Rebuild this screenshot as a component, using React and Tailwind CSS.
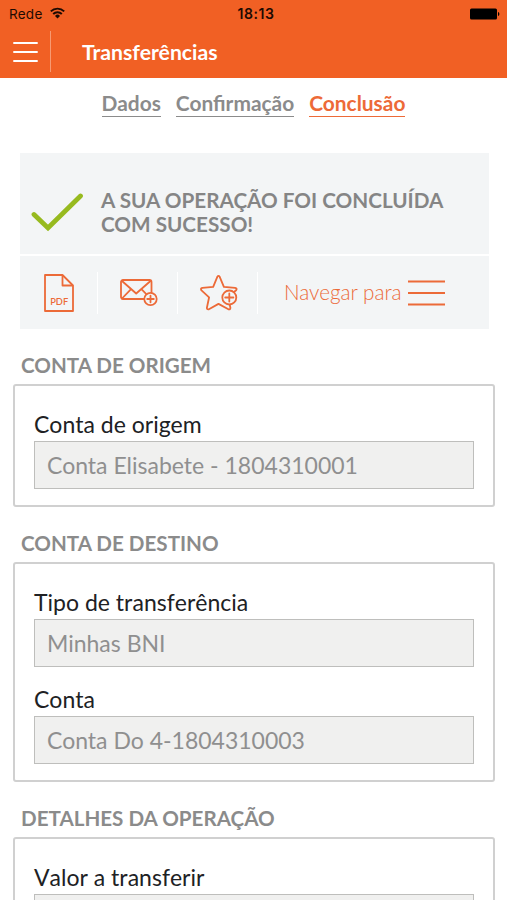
import { Fragment } from 'react';

const steps = [
  { label: 'Dados', active: false },
  { label: 'Confirmação', active: false },
  { label: 'Conclusão', active: true },
];

const sections = [
  {
    title: 'CONTA DE ORIGEM',
    fields: [{ label: 'Conta de origem', value: 'Conta Elisabete - 1804310001' }],
  },
  {
    title: 'CONTA DE DESTINO',
    fields: [
      { label: 'Tipo de transferência', value: 'Minhas BNI' },
      { label: 'Conta', value: 'Conta Do 4-1804310003' },
    ],
  },
  {
    title: 'DETALHES DA OPERAÇÃO',
    fields: [{ label: 'Valor a transferir', value: '' }],
  },
];

function StatusBar() {
  return (
    <div className="grid h-[27px] grid-cols-3 items-center pl-[9px] pr-[7px] font-['Inter',sans-serif] text-[13.5px] text-[#1d0a02]">
      <div className="flex items-center gap-[7px]">
        <span className="pt-px tracking-[0.25px]">Rede</span>
        <svg className="mb-0.5" width="15" height="12" viewBox="0 0 15 12" fill="none" stroke="currentColor" strokeWidth="1.9">
          <path d="M0.8 4.4a9.4 9.4 0 0 1 13.4 0" />
          <path d="M3.2 7a6 6 0 0 1 8.6 0" />
          <path d="M7.5 11.5 5 8.9a3.5 3.5 0 0 1 5 0z" fill="currentColor" stroke="none" />
        </svg>
      </div>
      <span className="pl-[3px] text-center text-[14px] font-semibold tracking-[0.6px]">18:13</span>
      <svg className="justify-self-end" width="30" height="12" viewBox="0 0 30 12" fill="#000">
        <rect x="0" y="0.5" width="27" height="11" rx="1.5" />
        <path d="M28 4c1.8.3 1.8 3.7 0 4z" />
      </svg>
    </div>
  );
}

function Header() {
  return (
    <header className="h-[78px] bg-[#f16024]">
      <StatusBar />
      <div className="flex h-[49px] items-center pl-[13px]">
        <svg width="25" height="22" viewBox="0 0 25 22" stroke="#fff" strokeWidth="2.2" strokeLinecap="round">
          <path d="M1.1 2h22.8M1.1 11h22.8M1.1 20h22.8" />
        </svg>
        <div className="ml-3 h-[41px] w-px bg-[#f79a72]" />
        <h1 className="ml-[31px] text-[21.2px] font-bold leading-6 text-white">Transferências</h1>
      </div>
    </header>
  );
}

function PdfIcon() {
  return (
    <svg width="30" height="38" viewBox="0 0 30 38" fill="none" stroke="#ec6a38" strokeWidth="1.8" strokeLinejoin="round">
      <path d="M1 1h17.5L29 11.5V37H1z" />
      <path d="M18.5 1v10.5H29" />
      <text x="15.2" y="30.5" textAnchor="middle" textLength="18" lengthAdjust="spacingAndGlyphs" fontSize="9.5" fontWeight="600" fontFamily="Lato, sans-serif" fill="#ec6a38" stroke="none">PDF</text>
    </svg>
  );
}

function MailIcon() {
  return (
    <svg width="38" height="28" viewBox="0 0 38 28" fill="none" stroke="#ec6a38" strokeWidth="1.8" strokeLinejoin="round" strokeLinecap="round">
      <rect x="1" y="1" width="30.5" height="19" rx="2" />
      <path d="M2 2l14.2 12.5L30.5 2M2 19.5l8.8-9.2M30.5 19.5l-8.8-9.2" />
      <circle cx="30.5" cy="20" r="6.2" fill="#f3f5f6" />
      <path d="M30.5 16.7v6.6M27.2 20h6.6" />
    </svg>
  );
}

function StarIcon() {
  return (
    <svg width="38" height="36" viewBox="0 0 38 36" fill="none" stroke="#ec6a38" strokeWidth="1.8" strokeLinejoin="round" strokeLinecap="round">
      <path d="M17.3 1.8q1.2-1.8 2.4 0l4.2 10 11.2 1.1q2.5.6 1 2.4L28 22l2.4 10.8q0 2.2-2 1.5l-9.9-5.4-9.6 5.4q-2.2.5-2-1.6L9.1 22.3 1.5 15.4q-1.4-2 .8-2.5l10.9-1.1z" />
      <circle cx="29.3" cy="22.5" r="7" fill="#f3f5f6" />
      <path d="M29.3 18.4v8.2M25.2 22.5h8.2" />
    </svg>
  );
}

function SuccessPanel() {
  const actions = [<PdfIcon />, <MailIcon />, <StarIcon />];
  return (
    <div className="ml-5 mt-[23px] flex w-[469px] flex-col gap-0.5">
      <div className="flex h-[101px] items-center bg-[#f3f5f6] pl-[11px] pt-[16px]">
        <svg className="mt-px" width="53" height="39" viewBox="0 0 53 39" fill="none" stroke="#97ba1f" strokeWidth="4.8" strokeLinecap="round">
          <path d="M3 21.5 17 35 49.5 3" />
        </svg>
        <p className="ml-[17px] text-[20.7px] font-bold leading-[24px] text-[#858585]">
          A SUA OPERAÇÃO FOI CONCLUÍDA
          <br />
          COM SUCESSO!
        </p>
      </div>
      <div className="flex h-[73px] items-center bg-[#f3f5f6]">
        {actions.map((icon, i) => (
          <Fragment key={i}>
            <button className="flex w-[77px] justify-center">{icon}</button>
            <span className="mr-0.5 h-[42px] w-px bg-white" />
          </Fragment>
        ))}
        <button className="ml-6 flex items-center gap-[6px] pt-px text-[20.7px] font-light text-[#ec6a38]">
          <span>Navegar para</span>
          <svg width="37" height="26" viewBox="0 0 37 26" stroke="#ec6a38" strokeWidth="2.2">
            <path d="M0 1.5h37M0 13h37M0 24.5h37" />
          </svg>
        </button>
      </div>
    </div>
  );
}

function Section({ title, fields }) {
  return (
    <section>
      <h2 className="flex h-[55px] items-end pb-[6px] pl-[21px] text-[20.6px] font-bold leading-[26px] text-[#8b8b8b]">{title}</h2>
      <div className="ml-[13px] flex w-[482px] flex-col gap-[18px] rounded-[3px] border-2 border-[#d0d0d0] px-[19px] pb-4 pt-6">
        {fields.map((field) => (
          <label key={field.label} className="block">
            <span className="block h-[31px] text-[23px] leading-[29px] text-[#202124] [font-kerning:none]">{field.label}</span>
            <span className="flex h-12 items-center border-[1.5px] border-[#bebebc] bg-[#f0f0ef] pl-3 text-[23px] text-[#8f8f8f]">{field.value}</span>
          </label>
        ))}
      </div>
    </section>
  );
}

export default function App() {
  return (
    <div className="h-[900px] w-[507px] overflow-hidden bg-white font-['Lato',sans-serif]">
      <Header />
      <nav className="flex h-[52px] items-center justify-center gap-[15px] pb-px text-[20.9px] font-bold">
        {steps.map((step) => (
          <a
            key={step.label}
            className={`border-b pb-px leading-[25px] ${step.active ? 'border-[#ed6a38] text-[#ed6a38]' : 'border-[#8b8b8b] text-[#8b8b8b]'}`}
          >
            {step.label}
          </a>
        ))}
      </nav>
      <SuccessPanel />
      {sections.map((section) => (
        <Section key={section.title} {...section} />
      ))}
    </div>
  );
}
